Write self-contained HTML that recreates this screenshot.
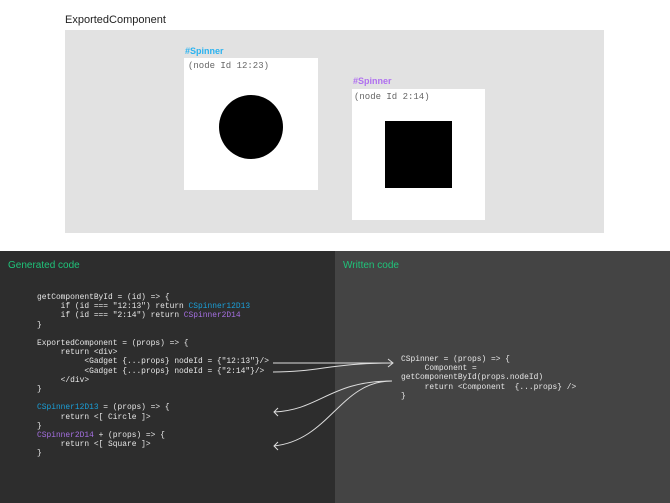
<!DOCTYPE html><html><head><style>
body{margin:0;width:670px;height:503px;overflow:hidden;background:#fff;font-family:"Liberation Sans",sans-serif;position:relative}
.a{position:absolute}
pre{margin:0;font-family:"Liberation Mono",monospace;font-size:7.9px;line-height:9.2px;color:#e6e6e6;position:absolute}
.b{color:#1a9fd8}.p{color:#a46fe0}
</style></head><body>
<div class="a" style="left:65px;top:14px;font-size:11px;color:#222">ExportedComponent</div>
<div class="a" style="left:65px;top:30px;width:539px;height:203px;background:#e2e2e2"></div>
<div class="a" style="left:185px;top:46px;font-size:9px;font-weight:bold;color:#2bb3f0">#Spinner</div>
<div class="a" style="left:184px;top:58px;width:134px;height:132px;background:#fff"></div>
<div class="a" style="left:188px;top:61px;font-family:'Liberation Mono',monospace;font-size:9px;color:#666">(node Id 12:23)</div>
<div class="a" style="left:219px;top:95px;width:64px;height:64px;border-radius:50%;background:#000"></div>
<div class="a" style="left:353px;top:76px;font-size:9px;font-weight:bold;color:#b070f0">#Spinner</div>
<div class="a" style="left:352px;top:89px;width:133px;height:131px;background:#fff"></div>
<div class="a" style="left:354px;top:92px;font-family:'Liberation Mono',monospace;font-size:9px;color:#666">(node Id 2:14)</div>
<div class="a" style="left:385px;top:121px;width:67px;height:67px;background:#000"></div>
<div class="a" style="left:0;top:251px;width:335px;height:252px;background:#2d2d2d"></div>
<div class="a" style="left:335px;top:251px;width:335px;height:252px;background:#444"></div>
<div class="a" style="left:8px;top:260px;font-size:10px;color:#1fc47a">Generated code</div>
<div class="a" style="left:343px;top:260px;font-size:10px;color:#1fc47a">Written code</div>
<pre style="left:37px;top:293px">getComponentById = (id) => {
     if (id === "12:13") return <span class="b">CSpinner12D13</span>
     if (id === "2:14") return <span class="p">CSpinner2D14</span>
}

ExportedComponent = (props) => {
     return &lt;div>
          &lt;Gadget {...props} nodeId = {"12:13"}/>
          &lt;Gadget {...props} nodeId = {"2:14"}/>
     &lt;/div>
}

<span class="b">CSpinner12D13</span> = (props) => {
     return &lt;[ Circle ]>
}
<span class="p">CSpinner2D14</span> + (props) => {
     return &lt;[ Square ]>
}</pre>
<pre style="left:401px;top:355px">CSpinner = (props) => {
     Component =
getComponentById(props.nodeId)
     return &lt;Component  {...props} />
}</pre>
<svg class="a" style="left:0;top:0" width="670" height="503" fill="none" stroke="#ddd" stroke-width="1">
<path d="M273 363 H393 M388 359 L393 363 L388 367"/>
<path d="M273 372 C320 372 330 363 393 363"/>
<path d="M392 381 C330 381 320 410 274 412 M278 408 L274 412 L278 416"/>
<path d="M392 381 C340 381 330 440 274 446 M278 442 L274 446 L278 450"/>
</svg>
</body></html>
